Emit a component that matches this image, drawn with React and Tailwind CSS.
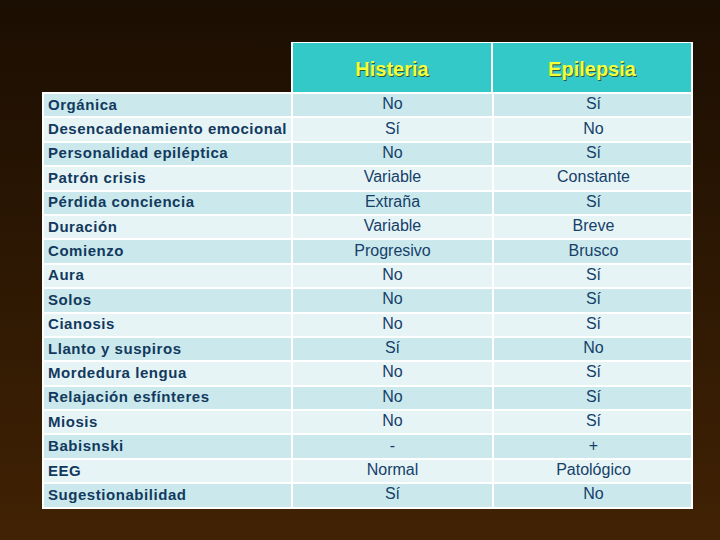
import React from 'react';

const rows = [
  ['Orgánica', 'No', 'Sí'],
  ['Desencadenamiento emocional', 'Sí', 'No'],
  ['Personalidad epiléptica', 'No', 'Sí'],
  ['Patrón crisis', 'Variable', 'Constante'],
  ['Pérdida conciencia', 'Extraña', 'Sí'],
  ['Duración', 'Variable', 'Breve'],
  ['Comienzo', 'Progresivo', 'Brusco'],
  ['Aura', 'No', 'Sí'],
  ['Solos', 'No', 'Sí'],
  ['Cianosis', 'No', 'Sí'],
  ['Llanto y suspiros', 'Sí', 'No'],
  ['Mordedura lengua', 'No', 'Sí'],
  ['Relajación esfínteres', 'No', 'Sí'],
  ['Miosis', 'No', 'Sí'],
  ['Babisnski', '-', '+'],
  ['EEG', 'Normal', 'Patológico'],
  ['Sugestionabilidad', 'Sí', 'No'],
];

export default function App() {
  return (
    <div
      className="w-[720px] h-[540px] bg-linear-to-b from-[#1b0e02] to-[#412204] pt-[42px] pl-[42px]"
      style={{ fontFamily: '"Liberation Sans", Arial, sans-serif' }}
    >
      <div className="w-[651px]">
        {/* header */}
        <div className="ml-[249px] bg-white pt-[1px] px-[2px] grid grid-cols-[198px_198px] gap-x-[2px]">
          {['Histeria', 'Epilepsia'].map((h) => (
            <div
              key={h}
              className="h-[49px] bg-[#33c9c9] flex items-center justify-center pt-[3px] text-[20px] font-bold text-[#f4ff3a] [text-shadow:1px_1px_0_#2a5a3a]"
            >
              {h}
            </div>
          ))}
        </div>
        {/* body */}
        <div className="bg-white p-[2px] flex flex-col gap-[2px]">
          {rows.map((r, i) => (
            <div
              key={r[0]}
              className={`grid grid-cols-[247px_199px_199px] gap-x-[2px] h-[22.4px] leading-none text-[#15406a] ${
                i % 2 === 0 ? 'bg-[#cbe9ec]' : 'bg-[#e6f4f6]'
              }`}
            >
              <div className="flex items-center pl-[4px] pb-[2px] text-[15px] font-bold tracking-[0.55px] text-[#12395e]">{r[0]}</div>
              <div className="flex items-center justify-center pb-[2px] text-[16px] border-l-2 border-white -ml-[2px]">{r[1]}</div>
              <div className="flex items-center justify-center pb-[2px] text-[16px] border-l-2 border-white -ml-[2px]">{r[2]}</div>
            </div>
          ))}
        </div>
      </div>
    </div>
  );
}
